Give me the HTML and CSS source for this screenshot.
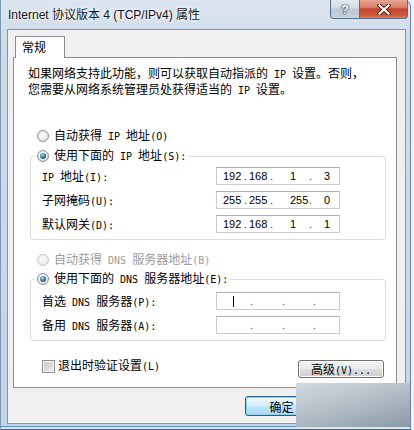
FILE: index.html
```html
<!DOCTYPE html>
<html lang="zh-CN">
<head>
<meta charset="utf-8">
<title>Internet 协议版本 4 (TCP/IPv4) 属性</title>
<link rel="stylesheet" href="styles.css">
</head>
<body>
<div class="window">
  <div class="titlebar">
    <div class="title">Internet 协议版本 4 (TCP/IPv4) 属性</div>
    <div class="caption-btns">
      <div class="cap help">?</div>
      <div class="cap close">
        <svg width="14" height="11" viewBox="0 0 14 11"><path d="M2.5 1.5 L11.5 9.5 M11.5 1.5 L2.5 9.5" stroke="#5a1d12" stroke-width="4.2" stroke-linecap="square" fill="none"/><path d="M2.5 1.5 L11.5 9.5 M11.5 1.5 L2.5 9.5" stroke="#fff" stroke-width="2.2" stroke-linecap="square" fill="none"/></svg>
      </div>
    </div>
  </div>
  <div class="client">
    <div class="tabctl">
      <div class="tabs"><div class="tab">常规</div></div>
      <div class="panel">
        <p class="desc">如果网络支持此功能，则可以获取自动指派的<span class="en"> IP </span>设置。否则，<br>您需要从网络系统管理员处获得适当的<span class="en"> IP </span>设置。</p>
        <div class="opt r1"><span class="radio"></span><span>自动获得<span class="en"> IP </span>地址<span class="en">(O)</span></span></div>
        <fieldset class="group g1">
          <legend><span class="radio on"></span><span>使用下面的<span class="en"> IP </span>地址<span class="en">(S):</span></span></legend>
          <div class="grid">
            <label><span class="en">IP </span>地址<span class="en">(I):</span></label>
            <div class="ip"><span>192</span><span class="dot">.</span><span>168</span><span class="dot">.</span><span>1</span><span class="dot">.</span><span>3</span></div>
            <label>子网掩码<span class="en">(U):</span></label>
            <div class="ip"><span>255</span><span class="dot">.</span><span>255</span><span class="dot">.</span><span>255</span><span class="dot">.</span><span>0</span></div>
            <label>默认网关<span class="en">(D):</span></label>
            <div class="ip"><span>192</span><span class="dot">.</span><span>168</span><span class="dot">.</span><span>1</span><span class="dot">.</span><span>1</span></div>
          </div>
        </fieldset>
        <div class="opt r2 disabled"><span class="radio"></span><span>自动获得<span class="en"> DNS </span>服务器地址<span class="en">(B)</span></span></div>
        <fieldset class="group g2">
          <legend><span class="radio on"></span><span>使用下面的<span class="en"> DNS </span>服务器地址<span class="en">(E):</span></span></legend>
          <div class="grid">
            <label>首选<span class="en"> DNS </span>服务器<span class="en">(P):</span></label>
            <div class="ip dns"><span><i class="caret"></i></span><span class="dot">.</span><span class="dot">.</span><span class="dot">.</span></div>
            <label>备用<span class="en"> DNS </span>服务器<span class="en">(A):</span></label>
            <div class="ip dns"><span></span><span class="dot">.</span><span class="dot">.</span><span class="dot">.</span></div>
          </div>
        </fieldset>
        <div class="bottom-row">
          <label class="check"><span class="cb"></span><span>退出时验证设置<span class="en">(L)</span></span></label>
          <button class="btn adv">高级<span class="en">(V)...</span></button>
        </div>
      </div>
    </div>
    <div class="buttons">
      <button class="btn ok">确定</button>
      <button class="btn">取消</button>
    </div>
  </div>
  <div class="overlay"></div>
</div>
</body>
</html>
```

FILE: styles.css
```css
html, body {
  margin: 0;
  padding: 0;
}

body {
  width: 414px;
  height: 430px;
  overflow: hidden;
  background: #eef2f6;
  font-family: "Noto Sans CJK SC", sans-serif;
  font-size: 12px;
  color: #000;
}

.en {
  font-family: "DejaVu Sans Mono", monospace;
  font-size: 10px;
  white-space: pre;
}

.window {
  position: relative;
  box-sizing: border-box;
  width: 411px;
  height: 430px;
  padding: 0 5px 6px 7px;
  display: flex;
  flex-direction: column;
  border-radius: 0 7px 0 0;
  background: linear-gradient(180deg, #dbe5f0 0, #cfdcea 40px, #c3d5e9 100%);
  box-shadow: inset 1px 0 0 #7c98b5, inset -1px 0 0 #6a86a4, inset 0 -1px 0 #3f6d99, inset 0 -3px 0 #d8e6f4, inset 0 -4px 0 #5c8fc2;
}

.titlebar {
  height: 29px;
  flex-shrink: 0;
  display: flex;
  align-items: flex-start;
}

.title {
  font-family: "Liberation Sans", "Noto Sans CJK SC", sans-serif;
  font-size: 12px;
  line-height: 16px;
  margin: 7px 0 0 1px;
  color: #151515;
  text-shadow: 0 0 5px #fff, 0 0 3px #fff;
}

.caption-btns {
  display: flex;
  margin-left: auto;
  margin-right: -2px;
}

.cap {
  box-sizing: border-box;
  height: 19px;
  border: 1px solid #5a6f86;
  border-top: none;
  display: flex;
  align-items: center;
  justify-content: center;
}

.help {
  width: 29px;
  border-right: none;
  border-radius: 0 0 0 4px;
  background: linear-gradient(180deg, #e3e9ef 0, #d2dbe5 45%, #bcc8d5 50%, #c6d2df 100%);
  color: #fff;
  font-family: "Liberation Sans", sans-serif;
  font-weight: bold;
  font-size: 13px;
  text-shadow: 0 0 1px #2e3b48, 0 0 1px #2e3b48, 0 0 2px #2e3b48;
}

.close {
  width: 49px;
  border-radius: 0 0 4px 0;
  background: linear-gradient(180deg, #e6a794 0, #d97b67 42%, #c5442d 50%, #cf5a3f 85%, #dc8066 100%);
}

.client {
  flex: 1;
  border: 1px solid #8396ab;
  background: #f0f0f0;
  display: flex;
  flex-direction: column;
}

.tabctl {
  margin: 6px 8px 0 5px;
}

.tabs {
  display: flex;
  padding-left: 2px;
}

.tab {
  box-sizing: border-box;
  width: 50px;
  height: 22px;
  border: 1px solid #898c95;
  border-bottom: none;
  background: #fff;
  margin-bottom: -1px;
  position: relative;
  z-index: 1;
  padding-left: 6px;
  line-height: 20px;
}

.panel {
  box-sizing: border-box;
  height: 331px;
  border: 1px solid #898c95;
  background: #fff;
}

.desc {
  margin: 0;
  padding: 8px 0 0 14px;
  line-height: 14px;
  white-space: nowrap;
}

.opt {
  display: flex;
  align-items: center;
  height: 14px;
  line-height: 14px;
  padding-left: 23px;
  gap: 5px;
  white-space: nowrap;
}

.r1 { margin-top: 31px; }
.r2 { margin-top: 13px; }

.disabled { color: #9b9b9b; }

.group {
  margin: 6px 10px 0 16px;
  padding: 4px 0 6px 0;
  border: 1px solid #d5dfe5;
  border-radius: 3px;
  min-width: 0;
}

.g2 {
  margin-top: 5px;
  padding-top: 6px;
}

.group legend {
  margin-left: 4px;
  padding: 0 2px;
  display: flex;
  align-items: center;
  gap: 5px;
  height: 14px;
  line-height: 14px;
  white-space: nowrap;
}

.grid {
  display: grid;
  grid-template-columns: 174px 124px;
  grid-auto-rows: 18px;
  row-gap: 6px;
  padding-left: 11px;
}

.grid label {
  line-height: 18px;
  white-space: nowrap;
}

.ip {
  box-sizing: border-box;
  height: 18px;
  border: 1px solid #c9cdd2;
  border-top-color: #abadb3;
  display: grid;
  grid-template-columns: 21px 5px 21px 20px 19px 15px 1fr;
  padding-left: 6px;
  font-family: "Liberation Sans", sans-serif;
  font-size: 11px;
  line-height: 16px;
  color: #000;
}

.ip .dot {
  color: #444;
}

.ip.dns {
  grid-template-columns: 33px 32px 31px 1fr;
  padding-left: 0;
}

.caret {
  display: block;
  width: 1px;
  height: 11px;
  margin: 3px 0 0 16px;
  background: #000;
}

.radio {
  position: relative;
  box-sizing: border-box;
  width: 12px;
  height: 12px;
  flex-shrink: 0;
  border-radius: 50%;
  border: 1px solid #8c8e90;
  background: radial-gradient(circle at 45% 40%, #ffffff 0, #f0f0f0 40%, #d2d2d2 100%);
}

.radio.on::after {
  content: "";
  position: absolute;
  left: 2px;
  top: 2px;
  width: 6px;
  height: 6px;
  border-radius: 50%;
  background: radial-gradient(circle at 40% 35%, #a6d8f2 0, #2f6f92 55%, #17374d 100%);
}

.disabled .radio {
  border-color: #c2c4c6;
  background: radial-gradient(circle at 45% 40%, #fbfbfb 0, #f1f1f1 50%, #e2e2e2 100%);
}

.bottom-row {
  display: flex;
  align-items: flex-start;
  margin-top: 17px;
  padding: 0 12px 0 28px;
}

.check {
  display: flex;
  align-items: center;
  gap: 2px;
  height: 14px;
  line-height: 14px;
  margin-top: 1px;
  white-space: nowrap;
}

.cb {
  box-sizing: border-box;
  width: 13px;
  height: 13px;
  border: 1px solid #8e8f8f;
  background: linear-gradient(135deg, #c6c6c6 0, #ececec 100%);
  box-shadow: inset 0 0 0 1px #f4f4f4;
  margin-right: 1px;
}

.btn {
  box-sizing: border-box;
  padding: 0;
  border: 1px solid #707070;
  border-radius: 3px;
  background: linear-gradient(180deg, #f2f2f2 0, #ebebeb 48%, #dddddd 52%, #cfcfcf 100%);
  box-shadow: inset 0 0 0 1px #fbfbfb;
  font-family: "Noto Sans CJK SC", sans-serif;
  font-size: 12px;
  color: #000;
  white-space: nowrap;
}

.adv {
  margin-left: auto;
  margin-top: 2px;
  width: 86px;
  height: 18px;
  line-height: 16px;
}

.buttons {
  display: flex;
  justify-content: flex-end;
  gap: 4px;
  margin: 8px 8px 0 0;
}

.buttons .btn {
  width: 75px;
  height: 20px;
}

.buttons .ok {
  width: 73px;
  border-color: #2c5f87;
  box-shadow: inset 0 0 0 1px #8fd0ef;
  background: linear-gradient(180deg, #eaf6fd 0, #d9f0fc 48%, #bee6fd 52%, #a7d9f5 100%);
}

.overlay {
  position: absolute;
  left: 296px;
  top: 383px;
  width: 114px;
  height: 44px;
  background: linear-gradient(165deg, #d2d9df 0, #bcc6ce 35%, #a2afba 70%, #8a99a6 100%);
}
```
